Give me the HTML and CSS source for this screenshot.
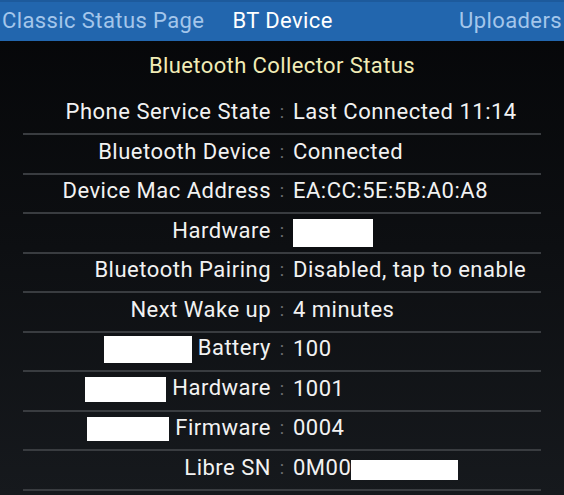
FILE: index.html
```html
<!DOCTYPE html>
<html>
<head>
<meta charset="utf-8">
<link rel="stylesheet" href="styles.css">
</head>
<body>
<div class="tabs">
  <div class="tab">Classic Status Page</div>
  <div class="tab active">BT Device</div>
  <div class="tab last">Uploaders</div>
</div>
<div class="content">
  <div class="title">Bluetooth Collector Status</div>
  <div class="rows">
    <div class="row"><span class="label">Phone Service State</span><span class="colon">:</span><span class="value">Last Connected 11:14</span></div>
    <div class="row"><span class="label">Bluetooth Device</span><span class="colon">:</span><span class="value">Connected</span></div>
    <div class="row"><span class="label">Device Mac Address</span><span class="colon">:</span><span class="value">EA:CC:5E:5B:A0:A8</span></div>
    <div class="row"><span class="label">Hardware</span><span class="colon">:</span><span class="value"><span class="redact r-hw"></span></span></div>
    <div class="row"><span class="label">Bluetooth Pairing</span><span class="colon">:</span><span class="value">Disabled, tap to enable</span></div>
    <div class="row"><span class="label">Next Wake up</span><span class="colon">:</span><span class="value">4 minutes</span></div>
    <div class="row"><span class="label"><span class="redact r-bat"></span> Battery</span><span class="colon">:</span><span class="value">100</span></div>
    <div class="row"><span class="label"><span class="redact r-hw2"></span> Hardware</span><span class="colon">:</span><span class="value">1001</span></div>
    <div class="row"><span class="label"><span class="redact r-fw"></span> Firmware</span><span class="colon">:</span><span class="value">0004</span></div>
    <div class="row"><span class="label">Libre SN</span><span class="colon">:</span><span class="value">0M00<span class="redact r-sn"></span></span></div>
  </div>
</div>
</body>
</html>
```

FILE: styles.css
```css
html, body {
  margin: 0;
  padding: 0;
}
body {
  width: 564px;
  height: 495px;
  overflow: hidden;
  font-family: Roboto, "Liberation Sans", sans-serif;
  background: linear-gradient(to bottom, #050608 0%, #0d0f12 50%, #16191d 100%);
  color: #f2f2f2;
}
.tabs {
  height: 41px;
  box-sizing: border-box;
  background: #2266ae;
  border-top: 2px solid #1d5a9c;
  display: flex;
  align-items: center;
  padding: 0 2px 0 2px;
  font-size: 22px;
  letter-spacing: 0.4px;
  white-space: nowrap;
}
.tab {
  color: #a4c6eb;
  line-height: 1;
  padding-bottom: 2px;
}
.tab.active {
  color: #ffffff;
  margin-left: 28px;
}
.tab.last {
  margin-left: auto;
}
.content {
  padding: 0 23px;
}
.title {
  height: 54.5px;
  box-sizing: border-box;
  padding-top: 12px;
  text-align: center;
  color: #f1ecb6;
  font-size: 22px;
  letter-spacing: 0.4px;
  line-height: 26px;
}
.row {
  display: grid;
  grid-template-columns: 1fr 22px 1fr;
  height: 39.5px;
  box-sizing: border-box;
  border-bottom: 2px solid #393c40;
  align-items: center;
  font-size: 22px;
  letter-spacing: 0.5px;
  line-height: 26px;
  padding-bottom: 4px;
  white-space: nowrap;
}
.label {
  text-align: right;
}
.colon {
  text-align: center;
  color: #6e7073;
  font-size: 18px;
  letter-spacing: 0;
}
.value {
  text-align: left;
}
.redact {
  display: inline-block;
  background: #ffffff;
  vertical-align: middle;
}
.r-hw {
  width: 80px;
  height: 28px;
  margin-top: 4px;
}
.r-bat {
  width: 88px;
  height: 27px;
}
.r-hw2 {
  width: 81px;
  height: 25px;
}
.r-fw {
  width: 82px;
  height: 24px;
}
.r-sn {
  width: 107px;
  height: 20px;
  vertical-align: -5px;
}
```
